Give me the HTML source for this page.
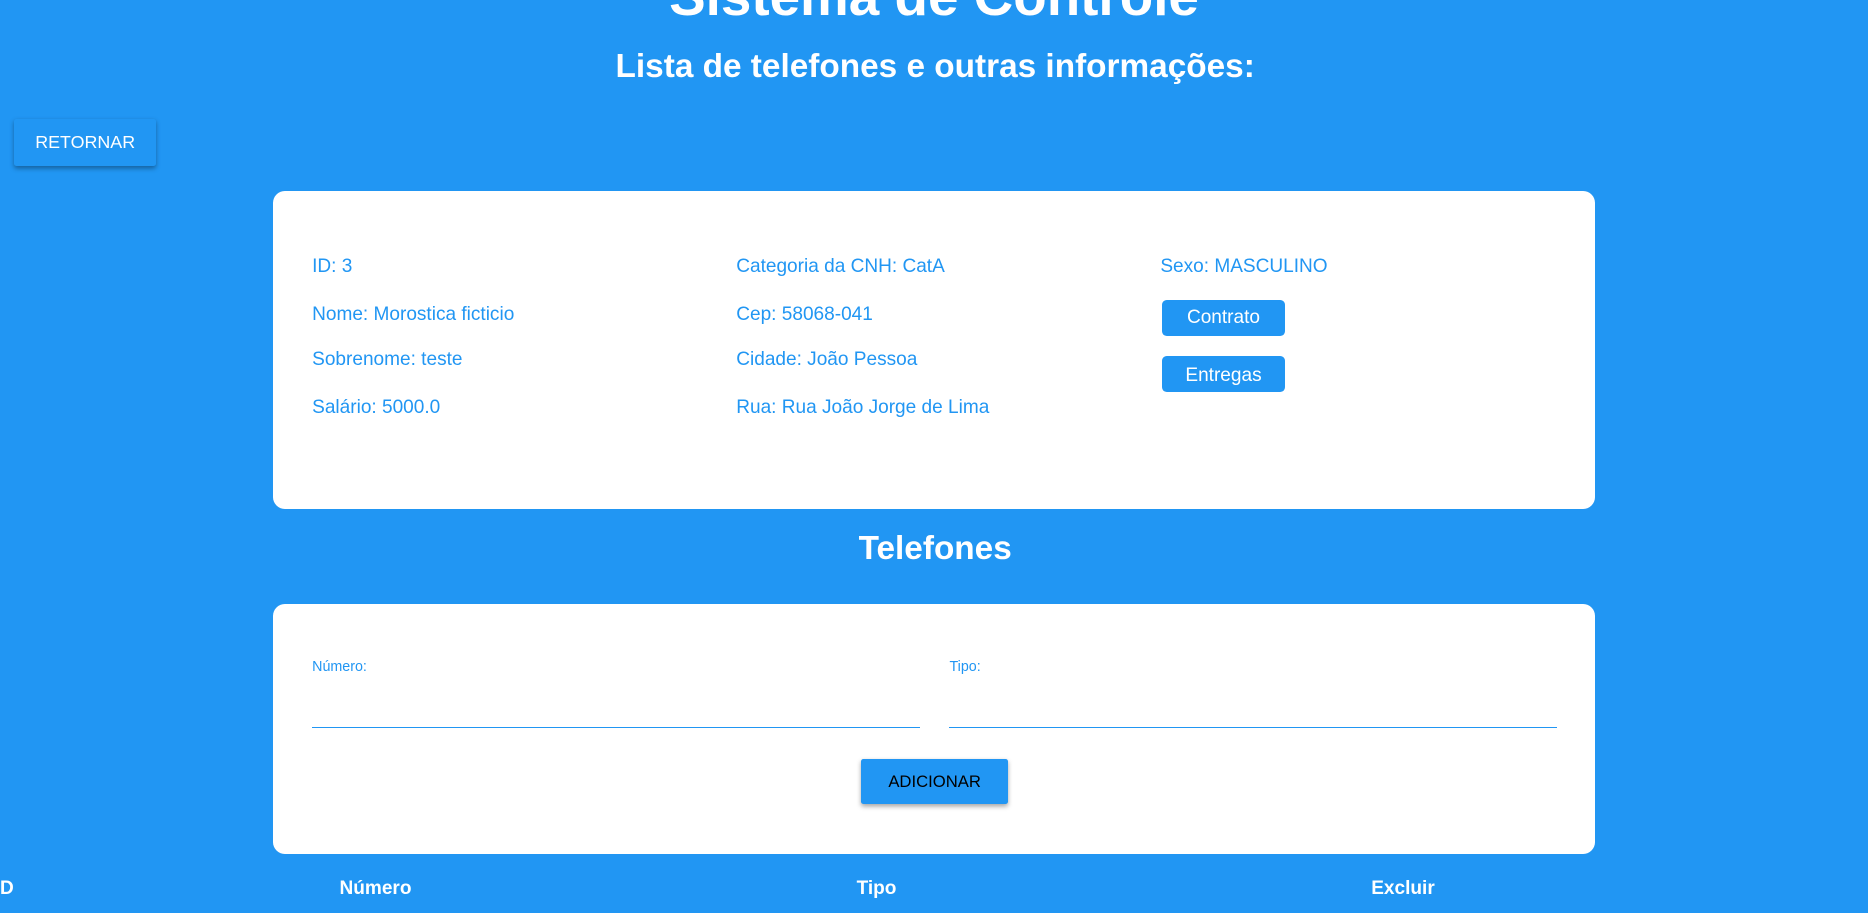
<!DOCTYPE html>
<html><head><meta charset="utf-8"><style>
html,body{margin:0;padding:0;background:#2196f3;overflow:hidden}
body{width:1568px;height:766px;position:relative;zoom:1.19133;font-family:"Liberation Sans",Arial,sans-serif}
.a{position:absolute;white-space:nowrap}
.t{color:#fff;font-weight:bold}
.card{position:absolute;background:#fff;border-radius:10px}
.f{color:#2196f3;font-size:16px}
.b{position:absolute;background:#2196f3;color:#fff;border-radius:4px;font-size:16px;text-align:center}
</style></head><body>
<div class="a t" style="left:0;width:1568px;text-align:center;font-size:46px;top:-30px">Sistema de Controle</div>
<div class="a t" style="left:0;width:1570px;text-align:center;font-size:28px;top:40px">Lista de telefones e outras informações:</div>
<div class="b" style="left:12px;top:100px;width:119px;height:39px;line-height:39px;font-size:15px;border-radius:2px;box-shadow:0 2px 4px rgba(0,0,0,.35)">RETORNAR</div>
<div class="card" style="left:229px;top:160px;width:1110px;height:267px"></div>
<div class="a f" style="left:262px;top:215px">ID: 3</div>
<div class="a f" style="left:262px;top:255px">Nome: Morostica ficticio</div>
<div class="a f" style="left:262px;top:293px">Sobrenome: teste</div>
<div class="a f" style="left:262px;top:333px">Salário: 5000.0</div>
<div class="a f" style="left:618px;top:215px">Categoria da CNH: CatA</div>
<div class="a f" style="left:618px;top:255px">Cep: 58068-041</div>
<div class="a f" style="left:618px;top:293px">Cidade: João Pessoa</div>
<div class="a f" style="left:618px;top:333px">Rua: Rua João Jorge de Lima</div>
<div class="a f" style="left:974px;top:215px">Sexo: MASCULINO</div>
<div class="b" style="left:975px;top:252px;width:104px;height:30px;line-height:31px">Contrato</div>
<div class="b" style="left:975px;top:299px;width:104px;height:30px;line-height:33px">Entregas</div>
<div class="a t" style="left:0;width:1570px;text-align:center;font-size:28px;top:445px">Telefones</div>
<div class="card" style="left:229px;top:507px;width:1110px;height:210px"></div>
<div class="a" style="left:262px;top:553px;font-size:12px;color:#2196f3">Número:</div>
<div class="a" style="left:797px;top:553px;font-size:12px;color:#2196f3">Tipo:</div>
<div class="a" style="left:262px;top:610px;width:510px;height:1px;background:#2196f3"></div>
<div class="a" style="left:797px;top:610px;width:510px;height:1px;background:#2196f3"></div>
<div class="b" style="left:723px;top:637px;width:123px;height:38px;line-height:38px;color:#000;font-size:14px;border-radius:2px;box-shadow:0 2px 4px rgba(0,0,0,.35)">ADICIONAR</div>
<div class="a t" style="left:0;top:737px;font-size:16px">D</div>
<div class="a t" style="left:285px;top:737px;font-size:16px">Número</div>
<div class="a t" style="left:719px;top:737px;font-size:16px">Tipo</div>
<div class="a t" style="left:1151px;top:737px;font-size:16px">Excluir</div>
</body></html>
